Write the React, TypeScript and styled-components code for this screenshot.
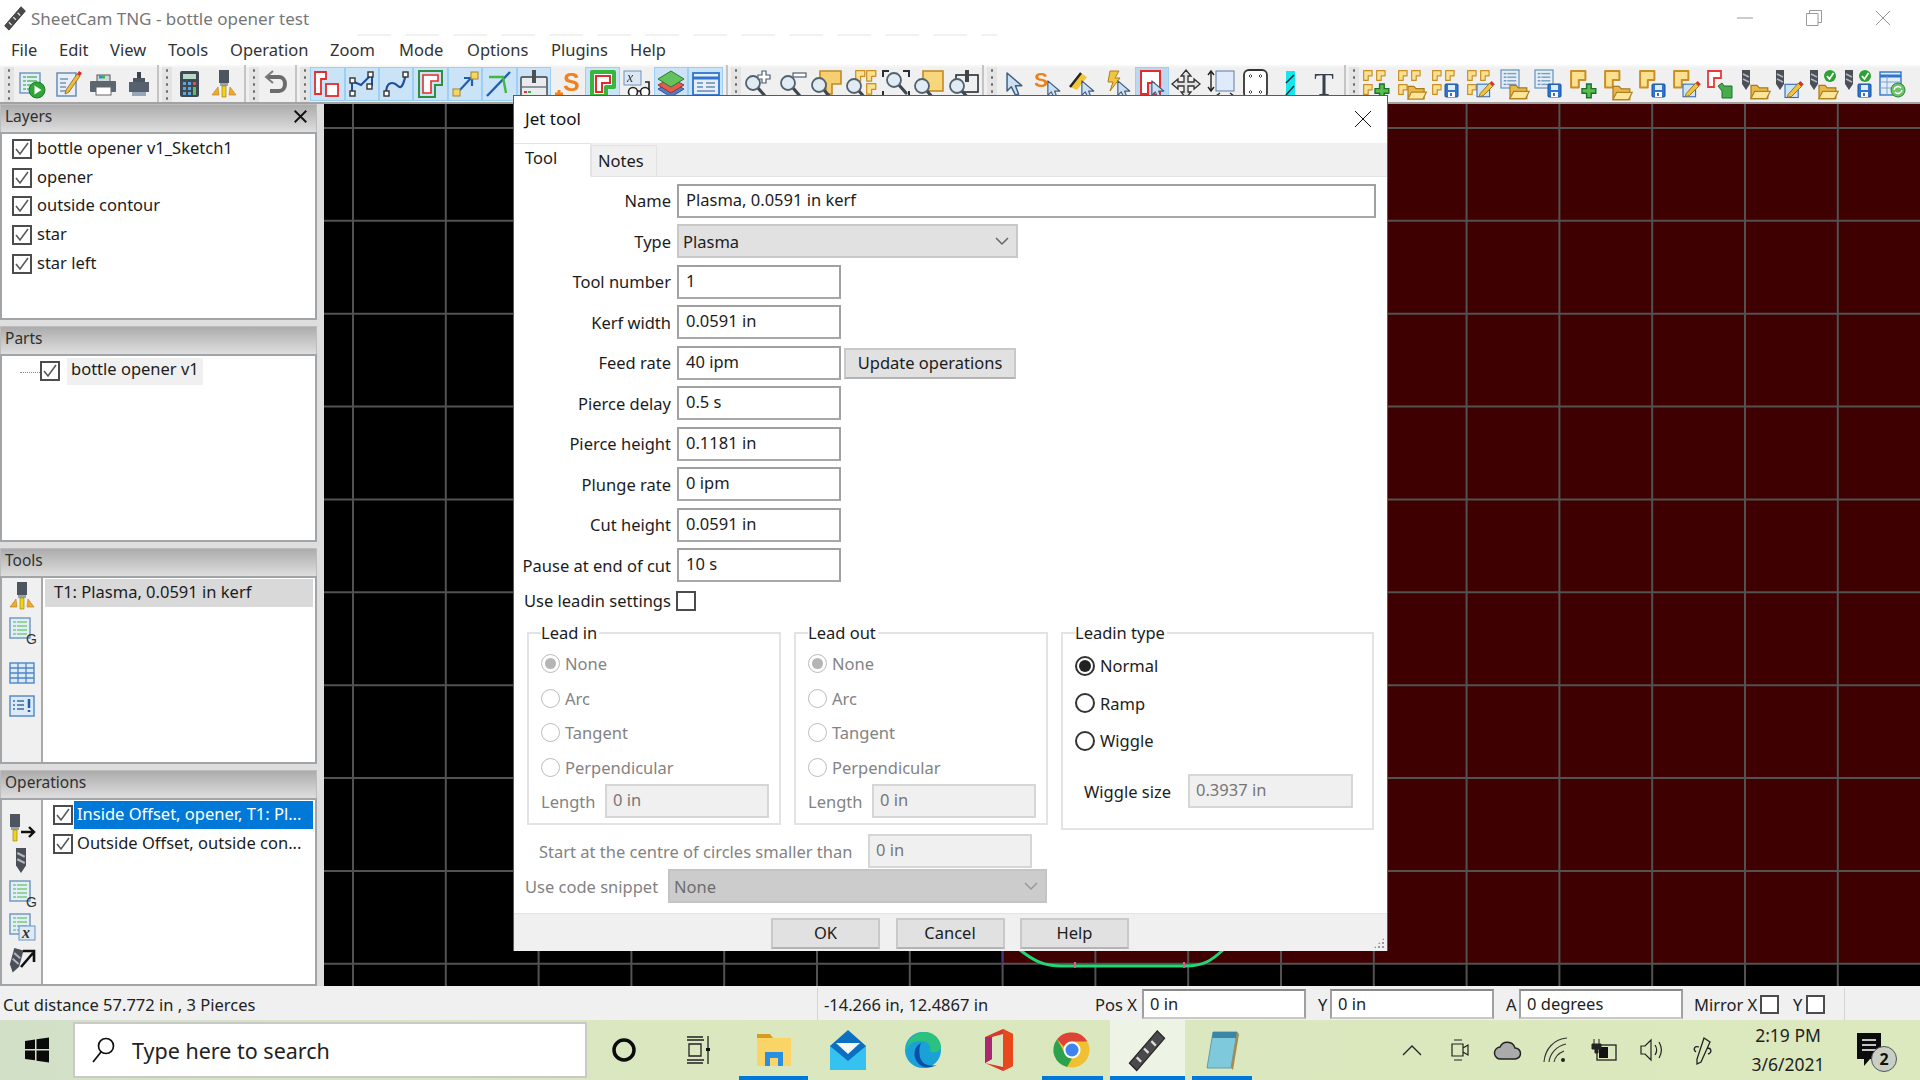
import React from 'react'
import styled, { createGlobalStyle } from 'styled-components'

const Global = createGlobalStyle`
  html, body { margin: 0; padding: 0; background: #f0f0f0; overflow: hidden; }
  body { font-family: "Noto Sans", "Open Sans", sans-serif; font-size: 16.5px; color: #1c1c1c; }
  * { box-sizing: border-box; }
  svg { display: block; overflow: visible; }
`

const Page = styled.div`
  position: relative;
  width: 1920px;
  height: 1080px;
  display: flex;
  flex-direction: column;
  overflow: hidden;
  filter: blur(0.35px);
`

/* title + menu */
const TitleBar = styled.div`
  height: 36px;
  background: #fff;
  display: flex;
  align-items: center;
  padding-left: 2px;
  color: #777;
  font-size: 17px;
`
const TitleText = styled.span`
  margin-left: 3px;
`
const WinButtons = styled.div`
  margin-left: auto;
  padding-right: 3px;
  display: flex;
`
const WinButton = styled.div`
  width: 69px;
  height: 36px;
  display: flex;
  align-items: center;
  justify-content: center;
`
const MenuBar = styled.div`
  position: relative;
  height: 29px;
  background: #fff;
  display: flex;
  align-items: center;
  padding: 0 0 2px 11px;
  font-size: 16.5px;
  color: #333;
`
const MenuGhost = styled.div`
  position: absolute;
  left: 357px;
  top: -2px;
  width: 640px;
  height: 2px;
  background: repeating-linear-gradient(90deg, #f1f1f1 0 34px, transparent 34px 48px);
`
const MenuItem = styled.span<{ $w: number }>`
  width: ${p => p.$w}px;
`

/* toolbar */
const Toolbar = styled.div`
  height: 39px;
  flex: none;
  padding-left: 2px;
  display: flex;
  gap: 1px;
  background: linear-gradient(#fafafa 0, #f0f0f0 3px);
  border-bottom: 2px solid #a2a2a2;
`
const ToolGroup = styled.div<{ $w?: number }>`
  flex: ${p => (p.$w ? `0 0 ${p.$w}px` : '1')};
  display: flex;
  align-items: center;
  border-right: ${p => (p.$w ? '2px solid #c4c4c4' : 'none')};
  padding-left: 12px;
  position: relative;
`
const Grip = styled.div`
  position: absolute;
  left: 2px;
  top: 2px;
  bottom: 0;
  width: 10px;
  background: radial-gradient(circle, #6a6a6a 1px, transparent 1.4px) center top / 4px 7px repeat-y, #e4e4e4;
`
const ToolButton = styled.div<{ $on?: boolean; $hot?: boolean; $pitch: number }>`
  flex: 0 0 ${p => p.$pitch}px;
  height: 34px;
  display: flex;
  align-items: center;
  justify-content: center;
  background: ${p => (p.$hot ? '#bcd8f0' : p.$on ? '#cbe3f7' : 'transparent')};
  border: 1px solid ${p => (p.$on || p.$hot ? '#9ccff5' : 'transparent')};
`

/* main area */
const Main = styled.div`
  flex: 1;
  display: flex;
  min-height: 0;
`
const Sidebar = styled.div`
  flex: 0 0 324px;
  background: #dedede;
  display: flex;
  flex-direction: column;
  gap: 6px;
  padding-right: 7px;
`
const Panel = styled.section`
  flex: 1;
  display: flex;
  flex-direction: column;
  min-height: 0;
`
const PanelHead = styled.header`
  height: 28px;
  flex: none;
  display: flex;
  align-items: center;
  justify-content: space-between;
  padding: 0 9px 5px 4px;
  background: linear-gradient(#acacac, #dedede);
  border: 1px solid #bdbdbd;
  border-bottom: none;
  color: #303030;
  font-size: 15.5px;
`
const PanelBody = styled.div`
  flex: 1;
  display: flex;
  background: #fff;
  border: 2px solid #a1a5a8;
  min-height: 0;
`
const SideIcons = styled.div`
  flex: 0 0 41px;
  background: #f0f0f0;
  border-right: 2px solid #a9a9a9;
  display: flex;
  flex-direction: column;
  align-items: center;
`
const SideIcon = styled.div<{ $top: number }>`
  margin-top: ${p => p.$top}px;
  height: 24px;
  display: flex;
  align-items: center;
`
const List = styled.div`
  flex: 1;
  min-width: 0;
  padding: 1px 2px 0;
  display: flex;
  flex-direction: column;
`
const LayerRow = styled.div`
  height: 28.6px;
  display: flex;
  align-items: center;
  gap: 5px;
  padding-left: 8px;
  line-height: 18px;
`
const LayerText = styled.span`
  margin-top: -2px;
`
const PartRow = styled.div`
  display: flex;
  align-items: center;
  padding: 0 0 0 16px;
  height: 28px;
`
const TreeDots = styled.div`
  width: 20px;
  border-top: 1px dotted #888;
  margin-top: 2px;
`
const PartLabel = styled.span`
  background: #f0f0f0;
  margin-left: 7px;
  padding: 0 4px;
  height: 27px;
  line-height: 21px;
`
const ToolRow = styled.div`
  height: 28px;
  background: #d9d9d9;
  padding: 0 0 3px 9px;
  display: flex;
  align-items: center;
`
const OpRow = styled.div`
  height: 28.6px;
  display: flex;
  align-items: center;
  padding-left: 8px;
  white-space: nowrap;
`
const OpText = styled.span<{ $selected?: boolean }>`
  flex: 1;
  height: 28px;
  line-height: 26px;
  padding-left: 3px;
  margin-left: 1px;
  background: ${p => (p.$selected ? '#0078d7' : 'transparent')};
  color: ${p => (p.$selected ? '#fff' : 'inherit')};
`
const Check = styled.span<{ $size?: number }>`
  flex: none;
  width: ${p => p.$size ?? 20}px;
  height: ${p => p.$size ?? 20}px;
  border: 2px solid #4c4c4c;
  background: #fff;
  display: inline-flex;
  align-items: center;
  justify-content: center;
`
const Canvas = styled.div`
  flex: 1;
  background: #000;
  min-width: 0;
`

/* status bar */
const StatusBar = styled.div`
  height: 34px;
  flex: none;
  background: #f0f0f0;
  display: flex;
  align-items: center;
  padding-top: 2px;
  color: #222;
`
const StatusCell = styled.div<{ $w: number; $line?: boolean }>`
  flex: 0 0 ${p => p.$w}px;
  height: 100%;
  display: flex;
  align-items: center;
  padding-left: ${p => (p.$line ? 6 : 3)}px;
  border-left: ${p => (p.$line ? '1px solid #d4d4d4' : 'none')};
`
const StatusLabel = styled.span<{ $w: number; $ml?: number }>`
  flex: 0 0 ${p => p.$w}px;
  margin-left: ${p => p.$ml ?? 0}px;
  white-space: nowrap;
`
const StatusInput = styled.div`
  flex: 0 0 164px;
  height: 30px;
  background: #fff;
  border: 2px solid #a0a0a0;
  border-top-color: #8a8a8a;
  border-bottom-color: #c8c8c8;
  padding-left: 6px;
  line-height: 25px;
`
const StatusEnd = styled.div`
  margin-left: 19px;
  height: 100%;
  border-left: 1px solid #d4d4d4;
`

/* taskbar */
const Taskbar = styled.div`
  height: 60px;
  flex: none;
  display: flex;
  align-items: stretch;
  background: linear-gradient(90deg, #d2e0c8 0, #dae7bf 640px, #dce8bd 100%);
`
const StartTile = styled.div`
  flex: 0 0 73px;
  display: flex;
  align-items: center;
  justify-content: center;
`
const SearchBox = styled.div`
  flex: 0 0 514px;
  margin: 2px 0;
  border: 2px solid #c9c9c9;
  background: #fff;
  display: flex;
  align-items: center;
  padding-left: 15px;
  gap: 16px;
  font-size: 21.5px;
  color: #222;
`
const AppTile = styled.div<{ $active?: boolean; $bar?: number }>`
  flex: 0 0 74.7px;
  position: relative;
  display: flex;
  align-items: center;
  justify-content: center;
  background: ${p => (p.$active ? '#eef4e5' : 'transparent')};
  &::after {
    content: '';
    display: ${p => (p.$bar === undefined ? 'none' : 'block')};
    position: absolute;
    left: ${p => p.$bar}px;
    right: ${p => p.$bar}px;
    bottom: 0;
    height: 4px;
    background: #0078d7;
  }
`
const Tray = styled.div`
  margin-left: auto;
  display: flex;
`
const TrayTile = styled.div<{ $w?: number }>`
  flex: 0 0 ${p => p.$w ?? 48}px;
  display: flex;
  align-items: center;
  justify-content: center;
`
const Clock = styled.div`
  flex: 0 0 118px;
  display: flex;
  flex-direction: column;
  align-items: center;
  justify-content: center;
  gap: 8px;
  font-size: 17.5px;
  line-height: 21px;
  color: #1f1f1f;
`
const Notify = styled.div`
  flex: 0 0 73px;
  padding-left: 9px;
  display: flex;
  align-items: center;
  position: relative;
`
const Badge = styled.span`
  position: absolute;
  left: 24px;
  top: 26px;
  width: 26px;
  height: 26px;
  border-radius: 50%;
  background: #c9cfc4;
  border: 1px solid #555;
  font-size: 16px;
  font-weight: 700;
  line-height: 24px;
  text-align: center;
  color: #111;
`

/* dialog */
const Dialog = styled.div`
  position: absolute;
  left: 513px;
  top: 95px;
  width: 875px;
  height: 856px;
  display: flex;
  flex-direction: column;
  background: #fff;
  border: 1px solid #5a5a5a;
  border-bottom: none;
`
const DialogHead = styled.div`
  height: 47px;
  flex: none;
  display: flex;
  align-items: center;
  justify-content: space-between;
  padding: 0 15px 2px 11px;
  font-size: 17px;
  color: #111;
`
const TabStrip = styled.div`
  height: 34px;
  flex: none;
  display: flex;
  align-items: flex-end;
  background: #f0f0f0;
  border-bottom: 1px solid #e3e3e3;
`
const Tab = styled.div<{ $on?: boolean }>`
  width: ${p => (p.$on ? 77 : 66)}px;
  height: ${p => (p.$on ? 34 : 31)}px;
  padding: ${p => (p.$on ? '2px 0 0 11px' : '3px 0 0 6px')};
  background: ${p => (p.$on ? '#fff' : '#f0f0f0')};
  border: 1px solid #e3e3e3;
  border-left: ${p => (p.$on ? 'none' : '1px solid #e3e3e3')};
  border-bottom: ${p => (p.$on ? '1px solid #fff' : 'none')};
  margin-bottom: ${p => (p.$on ? -1 : 0)}px;
`
const Form = styled.div`
  display: flex;
  flex-direction: column;
  gap: 7.05px;
  padding: 7px 11px 0 0;
`
const Row = styled.div`
  height: 33.45px;
  display: flex;
  align-items: center;
  gap: 6px;
`
const FieldLabel = styled.label`
  flex: 0 0 157px;
  text-align: right;
  white-space: nowrap;
`
const Field = styled.div<{ $w?: number }>`
  flex: ${p => (p.$w ? `0 0 ${p.$w}px` : '1')};
  height: 34px;
  border: 2px solid #a0a0a0;
  border-bottom-color: #a8a8a8;
  padding-left: 7px;
  line-height: 27px;
  background: #fff;
`
const Select = styled.div<{ $w: number; $off?: boolean }>`
  flex: 0 0 ${p => p.$w}px;
  height: 34px;
  display: flex;
  align-items: center;
  justify-content: space-between;
  padding: 0 7px 0 4px;
  background: ${p => (p.$off ? '#cccccc' : '#e1e1e1')};
  border: 2px solid ${p => (p.$off ? '#c4c4c4' : '#c8c8c8')};
  color: ${p => (p.$off ? '#6e6e6e' : 'inherit')};
`
const Button = styled.div<{ $w: number }>`
  flex: 0 0 ${p => p.$w}px;
  height: 31px;
  background: #e1e1e1;
  border: 2px solid #c9c9c9;
  border-bottom-color: #b4b4b4;
  text-align: center;
  line-height: 26px;
`
const UpdateButton = styled(Button)`
  margin: 2px 0 0 -3px;
`
const LeadinRow = styled.div`
  display: flex;
  align-items: center;
  height: 20px;
  margin: 9px 0 0 10px;
`
const LeadinLabel = styled.span`
  flex: 0 0 152px;
  white-space: nowrap;
`
const Groups = styled.div`
  display: flex;
  align-items: flex-start;
  gap: 13px;
  padding-left: 13px;
  margin-top: 13px;
`
const Group = styled.fieldset<{ $w: number; $pb: number }>`
  flex: 0 0 ${p => p.$w}px;
  min-width: 0;
  margin: 0;
  padding: 5px 12px ${p => p.$pb}px 12px;
  border: 2px solid #e3e3e3;
`
const Legend = styled.legend`
  padding: 0 2px 0 0;
  margin-left: 0;
  line-height: 18px;
`
const RadioRow = styled.div<{ $h: number; $off?: boolean }>`
  height: ${p => p.$h}px;
  display: flex;
  align-items: center;
  gap: 5px;
  color: ${p => (p.$off ? '#838383' : 'inherit')};
`
const Radio = styled.span<{ $off?: boolean; $dot?: boolean; $size: number }>`
  flex: none;
  width: ${p => p.$size}px;
  height: ${p => p.$size}px;
  border-radius: 50%;
  border: ${p => (p.$off ? '1px solid #bcbcbc' : '2px solid #333')};
  background: #fff;
  display: flex;
  align-items: center;
  justify-content: center;
  &::after {
    content: '';
    display: ${p => (p.$dot ? 'block' : 'none')};
    width: ${p => p.$size - 8}px;
    height: ${p => p.$size - 8}px;
    border-radius: 50%;
    background: ${p => (p.$off ? '#b5b5b5' : '#222')};
  }
`
const LengthRow = styled.div<{ $off?: boolean; $label: number; $ml?: number; $mt?: number }>`
  display: flex;
  align-items: center;
  margin: ${p => p.$mt ?? 0}px 0 0 ${p => p.$ml ?? 0}px;
  color: ${p => (p.$off ? '#838383' : 'inherit')};
  & > span {
    flex: 0 0 ${p => p.$label}px;
    white-space: nowrap;
  }
`
const OffField = styled.div<{ $w: number }>`
  flex: 0 0 ${p => p.$w}px;
  height: 34px;
  background: #f0f0f0;
  border: 2px solid #d6d6d6;
  padding-left: 6px;
  line-height: 27px;
  color: #777;
`
const Footer = styled.div`
  margin-top: auto;
  height: 38px;
  flex: none;
  display: flex;
  align-items: flex-start;
  gap: 15.5px;
  padding: 4px 0 0 257px;
  background: #f0f0f0;
  border-top: 1px solid #e3e3e3;
  position: relative;
`
const ResizeGrip = styled.div`
  position: absolute;
  right: 2px;
  bottom: 2px;
  width: 12px;
  height: 12px;
  background: radial-gradient(circle, #9a9a9a 1px, transparent 1.3px) 0 0 / 4px 4px;
  clip-path: polygon(100% 0, 100% 100%, 0 100%);
`

/* ---- icon pieces ---- */
const Ic = ({ s = 30, w, h, children }: { s?: number; w?: number; h?: number; children: React.ReactNode }) => (
  <svg viewBox={`0 0 ${w ?? 30} ${h ?? 30}`} width={w ?? s} height={h ?? s}>
    {children}
  </svg>
)
type At = { x?: number; y?: number; k?: number }
const at = ({ x = 0, y = 0, k = 1 }: At) => `translate(${x} ${y}) scale(${k})`

const Part = (p: At) => (
  <path transform={at(p)} d="M1 1h13v8H8v7H1z" fill="#fbe08f" stroke="#c98f26" strokeWidth="1.8" strokeLinejoin="round" />
)
const Plus = (p: At) => (
  <path transform={at(p)} d="M4 0h4v4h4v4H8v4H4V8H0V4h4z" fill="#58bf4b" stroke="#1e6f2b" strokeWidth="1.2" />
)
const Folder = (p: At) => (
  <g transform={at(p)}>
    <path d="M0 2h5l2 2h7v9H0z" fill="#e9b84c" stroke="#a87a1c" />
    <path d="M0 13l3-6h13l-3 6z" fill="#fde59a" stroke="#b0831f" />
  </g>
)
const Floppy = (p: At) => (
  <g transform={at(p)}>
    <rect width="13" height="13" rx="1" fill="#2f74cd" stroke="#1e4f97" />
    <rect x="3" y="1" width="7" height="5" fill="#dcecfb" />
    <rect x="3" y="8" width="7" height="5" fill="#fff" />
    <rect x="5" y="9" width="2" height="3" fill="#2f74cd" />
  </g>
)
const Pencil = (p: At) => (
  <g transform={at(p)}>
    <rect y="3" width="12" height="12" fill="#cfe3f7" stroke="#2f6ab8" />
    <path d="M3 12l9-10 3 3-9 9-4 1z" fill="#f1c23f" stroke="#8b6a18" strokeWidth=".8" />
    <path d="M12 2l2-2 3 3-2 2z" fill="#d8322c" />
  </g>
)
const Sheet = (p: At & { tone?: string }) => (
  <g transform={at(p)}>
    <rect width="20" height="20" fill="#e3eefa" stroke="#6d93bd" strokeWidth="1.4" />
    {[4, 8, 12, 16].map(y => (
      <g key={y}>
        <path d={`M3 ${y}h3`} stroke={p.tone ?? '#6d93bd'} strokeWidth="1.6" />
        <path d={`M7 ${y}h10`} stroke={p.tone ?? '#7e9dbf'} strokeWidth="1.6" />
      </g>
    ))}
  </g>
)
const Mag = (p: At) => (
  <g transform={at(p)}>
    <path d="M15 19l7 8" stroke="#3d4750" strokeWidth="3.2" strokeLinecap="round" />
    <circle cx="10" cy="14" r="7" fill="#e1ebf3" stroke="#51626f" strokeWidth="1.8" />
  </g>
)
const Cursor = (p: At) => (
  <path transform={at(p)} d="M1 1v17l4-4 4 8 3-1-3-8h6z" fill="#cddff2" stroke="#3e5f82" strokeWidth="1.4" strokeLinejoin="round" />
)
const Mill = (p: At) => (
  <g transform={at(p)}>
    <path d="M0 0h8v14l-4 6-4-6z" fill="#4b5058" />
    <path d="M1 4l6 3M1 9l6 3" stroke="#b3b7bc" strokeWidth="1.6" />
  </g>
)
const Ok = (p: At) => (
  <g transform={at(p)}>
    <circle cx="6" cy="6" r="6" fill="#2da234" />
    <path d="M3 6l2.5 3L9.500 3" stroke="#fff" strokeWidth="1.8" fill="none" />
  </g>
)
const Torch = (p: At) => (
  <g transform={at(p)}>
    <path d="M7 0h10v13H7z" fill="#4d5560" />
    <path d="M8 13h8v3H8z" fill="#9aa2ab" />
    <path d="M10 16h4v11h-4z" fill="#f3d315" stroke="#8a7a10" strokeWidth=".6" />
  </g>
)

const Icons: Record<string, React.ReactNode> = {
  run: <Ic><Sheet x={3} y={4} tone="#5fbf6a" /><circle cx="20" cy="21" r="8" fill="#2fa637" stroke="#1b7b2b" /><path d="M17.500 16.500l7 4.500-7 4.500z" fill="#fff" /></Ic>,
  edit: <Ic><rect x="4" y="4" width="19" height="23" fill="#e6eff9" stroke="#5f86b2" strokeWidth="1.4" /><path d="M7 10h8M7 14h6M7 18h6M7 22h10" stroke="#7a93b0" strokeWidth="1.5" /><path d="M13 21l11-16 3 2-11 16-4 2z" fill="#efbd3d" stroke="#86651a" strokeWidth=".8" /><path d="M24 5l2-3 3 2-2 3z" fill="#d63027" /></Ic>,
  print: <Ic><rect x="9" y="6" width="13" height="7" fill="#cfd8de" stroke="#555" /><path d="M11 8h3" stroke="#2b8fdc" strokeWidth="3" /><path d="M14 8h3" stroke="#3ab54a" strokeWidth="3" /><rect x="2" y="12" width="26" height="11" rx="1" fill="#5c666e" /><rect x="8" y="18" width="15" height="8" fill="#fff" stroke="#666" /></Ic>,
  post: <Ic><path d="M13 3h4v7h-4z" fill="#39424d" /><path d="M9 9h12v4H9z" fill="#4b5661" /><path d="M5 13h20v10H5z" fill="#56616d" /><path d="M8 23h14v4H8z" fill="#96a7b9" /></Ic>,
  calc: <Ic><rect x="6" y="2" width="19" height="26" rx="2" fill="#3e4953" /><rect x="9" y="5" width="13" height="5" fill="#b9d8c7" /><path d="M9 13h3v3H9zM14 13h3v3h-3zM9 18h3v3H9zM14 18h3v3h-3zM9 23h3v3H9zM14 23h3v3h-3z" fill="#5fa5df" /><path d="M19 13h3v3h-3z" fill="#d9564a" /><path d="M19 18h3v8h-3z" fill="#5cc06b" /></Ic>,
  torch: <Ic><Torch x={3} y={1} /><path d="M9 18l-6 8h7zM21 18l6 8h-7z" fill="#eea92e" stroke="#b77d1a" strokeWidth=".6" /></Ic>,
  undo: <Ic><path d="M6 8h12c8 0 8 14 0 14H9" fill="none" stroke="#6c6c6c" strokeWidth="4" /><path d="M12 2L5 8l7 6" fill="none" stroke="#7b7b7b" strokeWidth="2" /></Ic>,
  rects: <Ic><path d="M3 3h11v7H9v15H3z" fill="#fff" stroke="#e42c2c" strokeWidth="1.8" /><rect x="14" y="15" width="12" height="12" fill="#fff" stroke="#e42c2c" strokeWidth="1.8" /></Ic>,
  nodes: <Ic><path d="M5 25V12l9 4 11-11v12" fill="none" stroke="#1f4f9c" strokeWidth="2" /><g fill="#fff" stroke="#333" strokeWidth="1.4"><rect x="3" y="22" width="5" height="5" /><rect x="3" y="9" width="5" height="5" /><rect x="21" y="3" width="5" height="5" /><rect x="20" y="15" width="5" height="5" /></g></Ic>,
  curve: <Ic><path d="M5 25c0-14 8-12 12-8s6-4 8-12" fill="none" stroke="#1f4f9c" strokeWidth="2.2" /><g fill="#fff" stroke="#333" strokeWidth="1.4"><rect x="3" y="22" width="5" height="5" /><rect x="22" y="3" width="5" height="5" /></g></Ic>,
  offset: <Ic><path d="M3 2h23v14h-7v12H3z" fill="none" stroke="#2e8f3e" strokeWidth="2" /><path d="M7 6h15v6h-7v12H7z" fill="#fff" stroke="#e42c2c" strokeWidth="1.6" /></Ic>,
  dot: <Ic><path d="M8 23L22 8M14 9h8v8" fill="none" stroke="#1f5fb0" strokeWidth="2.2" /><rect x="3" y="20" width="7" height="7" fill="#f7d560" stroke="#a8862a" /><rect x="21" y="3" width="7" height="7" fill="#f7d560" stroke="#a8862a" /></Ic>,
  arrow: <Ic><path d="M3 27L26 3" stroke="#1f5fb0" strokeWidth="2.4" /><path d="M5 8h14l3 16" fill="none" stroke="#43b83f" strokeWidth="2.4" /></Ic>,
  machine: <Ic><rect x="2" y="8" width="26" height="19" rx="1" fill="#e9ecef" stroke="#3a3f45" strokeWidth="1.4" /><rect x="13" y="1" width="4" height="13" fill="#4a4f56" /><path d="M3 18h24" stroke="#3a3f45" /><path d="M5 23h3" stroke="#d33" strokeWidth="2" /><path d="M9 23h3" stroke="#3b3" strokeWidth="2" /></Ic>,
  splus: <Ic><path d="M2 25h8M6 21v8" stroke="#f0811c" strokeWidth="3" /><text x="10" y="22" fontFamily="Liberation Sans" fontWeight="700" fontSize="25" fill="#f0811c">S</text></Ic>,
  thick: <Ic><path d="M4 3h22v15h-8v9H4z" fill="#fff" stroke="#36b63a" strokeWidth="4" strokeLinejoin="round" /><path d="M8 7h14v7h-8v9H8z" fill="#fff" stroke="#e42c2c" strokeWidth="2" /></Ic>,
  glasses: <Ic><rect x="2" y="2" width="17" height="14" fill="#dbe7f3" stroke="#6d93bd" /><text x="5" y="13" fontFamily="Liberation Serif" fontStyle="italic" fontSize="14" fill="#333">x</text><circle cx="11" cy="23" r="4.500" fill="#fff" stroke="#222" strokeWidth="1.6" /><circle cx="23" cy="23" r="4.500" fill="#fff" stroke="#222" strokeWidth="1.6" /><path d="M15 22h4M27 21v-8h-4" fill="none" stroke="#222" strokeWidth="1.6" /></Ic>,
  layers: <Ic><path d="M15 13l13 7-13 8-13-8z" fill="#4f7fc8" stroke="#2d5596" /><path d="M15 9l13 7-13 8-13-8z" fill="#e25d4f" stroke="#9c3027" /><path d="M15 2l13 8-13 8-13-8z" fill="#63c25e" stroke="#2c7c2c" /></Ic>,
  window: <Ic><rect x="2" y="4" width="26" height="22" fill="#e5eff9" stroke="#2f74cd" strokeWidth="1.8" /><path d="M2 9h26" stroke="#2f74cd" strokeWidth="3" /><path d="M6 14h6M6 18h6M15 14h9M15 18h9M6 22h18" stroke="#6a8ab0" strokeWidth="1.5" /></Ic>,
  zplus: <Ic><Mag /><path d="M19 2h4v4h4v4h-4v4h-4v-4h-4V6h4z" fill="#fff" stroke="#4d5f70" strokeWidth="1.2" /></Ic>,
  zminus: <Ic><Mag /><rect x="15" y="4" width="13" height="4" fill="#fff" stroke="#4d5f70" strokeWidth="1.2" /></Ic>,
  zpart: <Ic><path d="M8 2h21v13h-9v10H14V14H8z" fill="#f6cf72" stroke="#c28a24" strokeWidth="1.6" /><Mag x={-3} y={2} /></Ic>,
  zparts: <Ic><Part x={8} y={1} k={.7} /><Part x={19} y={1} k={.7} /><Part x={19} y={14} k={.7} /><Mag x={-3} y={3} /></Ic>,
  zfit: <Ic><path d="M2 8V2h6M22 2h6v6M2 22v6h6M22 28h6v-6" fill="none" stroke="#2a2f35" strokeWidth="2" /><Mag x={3} y={-3} /></Ic>,
  zsq: <Ic><rect x="8" y="2" width="20" height="20" fill="#f7d67c" stroke="#c28a24" strokeWidth="1.6" /><Mag x={-3} y={3} /></Ic>,
  zmach: <Ic><rect x="6" y="6" width="22" height="17" fill="#eef0f2" stroke="#2a2f35" strokeWidth="1.6" /><rect x="15" y="1" width="4" height="12" fill="#444" /><Mag x={-3} y={3} /></Ic>,
  ptr: <Ic><Cursor x={7} y={3} k={1.05} /></Ic>,
  ptrS: <Ic><text x="0" y="18" fontFamily="Liberation Sans" fontWeight="700" fontSize="21" fill="#ef7f16">S</text><Cursor x={13} y={11} k={.85} /></Ic>,
  ptrLine: <Ic><path d="M2 18L13 4l6 4-10 13z" fill="#f1c63b" /><path d="M2 18L13 4" stroke="#222" strokeWidth="2.4" /><Cursor x={13} y={11} k={.85} /></Ic>,
  ptrBolt: <Ic><path d="M7 2h9l-4 7h5L7 22l3-9H5z" fill="#f2c53f" stroke="#a97f1c" /><Cursor x={14} y={11} k={.85} /></Ic>,
  ptrL: <Ic><path d="M4 2h19v24h-6V14h-6v11H4z" fill="#fff" stroke="#e42c2c" strokeWidth="2" /><Cursor x={14} y={11} k={.85} /></Ic>,
  move: <Ic><path d="M15 1l5 6h-3v6h6v-3l6 5-6 5v-3h-6v6h3l-5 6-5-6h3v-6H7v3l-6-5 6-5v3h6V7h-3z" fill="#e4e4e4" stroke="#333" strokeWidth="1.3" /></Ic>,
  dims: <Ic><rect x="10" y="2" width="18" height="20" fill="#dfeafa" stroke="#5a7ba3" /><path d="M5 2v20M2 6l3-4 3 4M2 18l3 4 3-4M10 27h18M14 24l-4 3 4 3M24 24l4 3-4 3" fill="none" stroke="#222" strokeWidth="1.4" /></Ic>,
  plate: <Ic><rect x="4" y="1" width="23" height="28" rx="5" fill="#fff" stroke="#333" strokeWidth="1.8" /><path d="M9 7l1.500-1.500L12 7l-1.500 1.500zM19 7l1.500-1.500L22 7l-1.500 1.500zM9 23l1.500-1.500L12 23l-1.500 1.500zM19 23l1.500-1.500L22 23l-1.500 1.500z" stroke="#444" fill="none" /></Ic>,
  cyan: <Ic><rect x="11" y="2" width="9" height="26" fill="#16e6ee" /><path d="M11 14l8-8M11 26l8-9" stroke="#1b2a33" strokeWidth="1.6" /></Ic>,
  letter: <Ic><text x="15" y="26" textAnchor="middle" fontFamily="Liberation Serif" fontSize="32" fill="#36414d">T</text></Ic>,
  multiPlus: <Ic><Part x={2} y={1} k={.65} /><Part x={15} y={1} k={.65} /><Part x={2} y={15} k={.65} /><Plus x={14} y={15} k={1.15} /></Ic>,
  multiOpen: <Ic><Part x={2} y={1} k={.65} /><Part x={15} y={1} k={.65} /><Part x={2} y={15} k={.65} /><Folder x={12} y={15} k={1.15} /></Ic>,
  multiSave: <Ic><Part x={2} y={1} k={.65} /><Part x={15} y={1} k={.65} /><Part x={2} y={15} k={.65} /><Floppy x={15} y={15} /></Ic>,
  multiEdit: <Ic><Part x={2} y={1} k={.65} /><Part x={15} y={1} k={.65} /><Part x={2} y={15} k={.65} /><Pencil x={12} y={12} k={1.05} /></Ic>,
  listOpen: <Ic><Sheet x={2} y={1} k={.9} /><Folder x={11} y={14} k={1.2} /></Ic>,
  listSave: <Ic><Sheet x={2} y={1} k={.9} /><Floppy x={15} y={15} /></Ic>,
  partPlus: <Ic><Part x={2} y={1} k={1.1} /><Plus x={14} y={15} k={1.15} /></Ic>,
  partOpen: <Ic><Part x={2} y={1} k={1.1} /><Folder x={11} y={15} k={1.2} /></Ic>,
  partSave: <Ic><Part x={2} y={1} k={1.1} /><Floppy x={15} y={15} /></Ic>,
  partEdit: <Ic><Part x={2} y={1} k={1.1} /><Pencil x={12} y={12} k={1.05} /></Ic>,
  redGreen: <Ic><path d="M3 2h13v7H9v9H3z" fill="#fff" stroke="#e83a3a" strokeWidth="1.8" /><path d="M13 17l4-3 2 3h8v12H17v-7z" fill="#45ad4a" stroke="#1f7030" /></Ic>,
  millOpen: <Ic><Mill x={2} y={1} /><Folder x={11} y={14} k={1.2} /></Ic>,
  millEdit: <Ic><Mill x={2} y={1} /><Pencil x={11} y={12} k={1.1} /></Ic>,
  millOkOpen: <Ic><Mill x={2} y={1} /><Ok x={16} y={1} /><Folder x={11} y={14} k={1.2} /></Ic>,
  millOkSave: <Ic><Mill x={2} y={1} /><Ok x={16} y={1} /><Floppy x={15} y={15} /></Ic>,
  tableSync: <Ic><rect x="3" y="3" width="21" height="23" fill="#e3eefa" stroke="#2f74cd" strokeWidth="1.4" /><path d="M3 7h21" stroke="#2f74cd" strokeWidth="3" /><path d="M3 13h21M3 19h21M10 7v19" stroke="#7da2cc" /><circle cx="21" cy="21" r="7" fill="#6cc368" stroke="#2a8232" /><path d="M17 21a4 4 0 0 1 7-2M25 21a4 4 0 0 1-7 2" fill="none" stroke="#fff" strokeWidth="1.4" /></Ic>,
}

const gcode = (
  <Ic>
    <Sheet x={3} y={3} tone="#7ccf7f" />
    <text x="19" y="29" fontFamily="Liberation Sans" fontSize="14" fill="#333">G</text>
  </Ic>
)
const gridIcon = (
  <Ic>
    <rect x="3" y="5" width="24" height="20" fill="#dce9f7" stroke="#4d86c6" strokeWidth="1.4" />
    <path d="M3 10h24M3 15h24M3 20h24M11 5v20M19 5v20" stroke="#4d86c6" strokeWidth="1.3" />
  </Ic>
)
const alertList = (
  <Ic>
    <rect x="3" y="5" width="24" height="20" fill="#dce9f7" stroke="#4d86c6" strokeWidth="1.4" />
    <path d="M6 10h2M10 10h7M6 14h2M10 14h7M6 18h2M10 18h7" stroke="#3b6ea8" strokeWidth="1.4" />
    <path d="M22 8v9M22 19v2" stroke="#1f5fb0" strokeWidth="2.500" />
  </Ic>
)
const varList = (
  <Ic>
    <Sheet x={3} y={2} tone="#7ccf7f" />
    <rect x="12" y="14" width="16" height="14" fill="#dce9f7" stroke="#6d93bd" />
    <text x="15" y="26" fontFamily="Liberation Serif" fontStyle="italic" fontWeight="700" fontSize="16" fill="#333">x</text>
  </Ic>
)
const torchSide = (
  <Ic>
    <Torch x={3} y={1} />
    <path d="M9 18l-6 8h7zM21 18l6 8h-7z" fill="#eea92e" stroke="#b77d1a" strokeWidth=".6" />
  </Ic>
)
const torchArrow = (
  <Ic>
    <Torch x={-4} y={2} />
    <path d="M14 20h13M22 15l5 5-5 5" stroke="#111" strokeWidth="2.400" fill="none" />
  </Ic>
)
const millSide = <Ic><Mill x={9} y={3} k={1.25} /></Ic>
const millArrow = (
  <Ic>
    <g transform="rotate(15 10 12)"><Mill x={5} y={4} k={1.2} /></g>
    <path d="M14 22l12-14M16 6h11v11" stroke="#111" strokeWidth="2.600" fill="none" />
  </Ic>
)

const tick = (
  <svg width="16" height="16" viewBox="0 0 16 16">
    <path d="M2 8l4 5 8-11" fill="none" stroke="#5a5a5a" strokeWidth="1.6" />
  </svg>
)
const CheckBox = ({ on, size }: { on?: boolean; size?: number }) => <Check $size={size}>{on ? tick : null}</Check>
const chevron = (c: string) => (
  <svg width="14" height="9" viewBox="0 0 14 9">
    <path d="M1 1l6 6 6-6" fill="none" stroke={c} strokeWidth="1.500" />
  </svg>
)
const crossSvg = (size: number, c: string, sw = 1) => (
  <svg width={size} height={size} viewBox="0 0 18 18">
    <path d="M1 1l16 16M17 1L1 17" stroke={c} strokeWidth={sw} />
  </svg>
)

const toolGroups: { w?: number; pitch?: number; items: (string | [string, 'on' | 'hot'])[] }[] = [
  { w: 156, pitch: 35.8, items: ['run', 'edit', 'print', 'post'] },
  { w: 86, items: ['calc', 'torch'] },
  { w: 50, items: ['undo'] },
  {
    w: 430,
    items: [
      ['rects', 'on'], ['nodes', 'on'], ['curve', 'on'], ['offset', 'on'], ['dot', 'on'], ['arrow', 'on'], ['machine', 'on'],
      'splus', ['thick', 'on'], 'glasses', ['layers', 'on'], ['window', 'on'],
    ],
  },
  { w: 255, items: ['zplus', 'zminus', 'zpart', 'zparts', 'zfit', 'zsq', 'zmach'] },
  { w: 361, items: ['ptr', 'ptrS', 'ptrLine', 'ptrBolt', ['ptrL', 'hot'], 'move', 'dims', 'plate', 'cyan', 'letter'] },
  {
    items: [
      'multiPlus', 'multiOpen', 'multiSave', 'multiEdit', 'listOpen', 'listSave', 'partPlus', 'partOpen', 'partSave',
      'partEdit', 'redGreen', 'millOpen', 'millEdit', 'millOkOpen', 'millOkSave', 'tableSync',
    ],
  },
]

const menus: [string, number][] = [
  ['File', 48], ['Edit', 51], ['View', 58], ['Tools', 62], ['Operation', 100], ['Zoom', 69], ['Mode', 68],
  ['Options', 84], ['Plugins', 79], ['Help', 50],
]

const sheetLogo = (size: number) => (
  <svg width={size} height={size} viewBox="0 0 30 30">
    <path d="M3 24L22 2l5 5L8 29z" fill="#4a4a4a" stroke="#222" strokeWidth=".8" />
    <path d="M8 20l3 3M13 14l3 3M18 9l3 3" stroke="#ddd" strokeWidth="1.600" />
  </svg>
)

function GridCanvas() {
  const w = 1596
  const h = 882
  const xs = Array.from({ length: 18 }, (_, i) => 29 + i * 92.8)
  const ys = Array.from({ length: 10 }, (_, i) => 24 + i * 92.87)
  return (
    <svg width={w} height={h} viewBox={`0 0 ${w} ${h}`}>
      <rect x="678" y="0" width={w - 678} height="860" fill="#3e0000" />
      {xs.map(x => <path key={x} d={`M${x} 0V${h}`} stroke="#525252" strokeWidth="2" />)}
      {ys.map(y => <path key={y} d={`M0 ${y}H${w}`} stroke="#525252" strokeWidth="2" />)}
      <path d="M678 845V860" stroke="#2525b0" strokeWidth="1" />
      <path d="M696 846c14 11 24 16 42 16h124c18 0 26-6 37-16" fill="none" stroke="#1fd873" strokeWidth="3" />
      <path d="M751 858v6M860 858v6" stroke="#e25590" strokeWidth="2" />
    </svg>
  )
}

const Lead = ({ title }: { title: string }) => (
  <Group $w={254} $pb={5}>
    <Legend>{title}</Legend>
    {['None', 'Arc', 'Tangent', 'Perpendicular'].map((t, i) => (
      <RadioRow key={t} $h={34.4} $off>
        <Radio $off $dot={i === 0} $size={19} />
        {t}
      </RadioRow>
    ))}
    <LengthRow $off $label={64}>
      <span>Length</span>
      <OffField $w={164}>0 in</OffField>
    </LengthRow>
  </Group>
)

const fields = [
  ['Tool number', '1'],
  ['Kerf width', '0.0591 in'],
  ['Feed rate', '40 ipm'],
  ['Pierce delay', '0.5 s'],
  ['Pierce height', '0.1181 in'],
  ['Plunge rate', '0 ipm'],
  ['Cut height', '0.0591 in'],
  ['Pause at end of cut', '10 s'],
]

export default function App() {
  return (
    <Page>
      <Global />
      <TitleBar>
        {sheetLogo(26)}
        <TitleText>SheetCam TNG - bottle opener test</TitleText>
        <WinButtons>
          <WinButton>
            <svg width="16" height="2"><path d="M0 1h16" stroke="#999" /></svg>
          </WinButton>
          <WinButton>
            <svg width="16" height="16" viewBox="0 0 16 16">
              <path d="M.5 3.500h11.500v12H.5zM3.500 3.500V.5h12v12H12" fill="none" stroke="#999" />
            </svg>
          </WinButton>
          <WinButton>{crossSvg(16, '#888')}</WinButton>
        </WinButtons>
      </TitleBar>
      <MenuBar>
        <MenuGhost />
        {menus.map(([m, w]) => <MenuItem key={m} $w={w}>{m}</MenuItem>)}
      </MenuBar>
      <Toolbar>
        {toolGroups.map((g, i) => (
          <ToolGroup key={i} $w={g.w}>
            <Grip />
            {g.items.map(it => {
              const name = typeof it === 'string' ? it : it[0]
              const mode = typeof it === 'string' ? undefined : it[1]
              return (
                <ToolButton key={name} $pitch={g.pitch ?? 34.4} $on={mode === 'on'} $hot={mode === 'hot'}>
                  {Icons[name]}
                </ToolButton>
              )
            })}
          </ToolGroup>
        ))}
      </Toolbar>

      <Main>
        <Sidebar>
          <Panel>
            <PanelHead>
              Layers
              {crossSvg(13, '#111', 2.600)}
            </PanelHead>
            <PanelBody>
              <List>
                {['bottle opener v1_Sketch1', 'opener', 'outside contour', 'star', 'star left'].map(t => (
                  <LayerRow key={t}>
                    <CheckBox on />
                    <LayerText>{t}</LayerText>
                  </LayerRow>
                ))}
              </List>
            </PanelBody>
          </Panel>
          <Panel>
            <PanelHead>Parts</PanelHead>
            <PanelBody>
              <List>
                <PartRow>
                  <TreeDots />
                  <CheckBox on />
                  <PartLabel>bottle opener v1</PartLabel>
                </PartRow>
              </List>
            </PanelBody>
          </Panel>
          <Panel>
            <PanelHead>Tools</PanelHead>
            <PanelBody>
              <SideIcons>
                <SideIcon $top={6}>{torchSide}</SideIcon>
                <SideIcon $top={10}>{gcode}</SideIcon>
                <SideIcon $top={19}>{gridIcon}</SideIcon>
                <SideIcon $top={9}>{alertList}</SideIcon>
              </SideIcons>
              <List>
                <ToolRow>T1: Plasma, 0.0591 in kerf</ToolRow>
              </List>
            </PanelBody>
          </Panel>
          <Panel>
            <PanelHead>Operations</PanelHead>
            <PanelBody>
              <SideIcons>
                <SideIcon $top={15}>{torchArrow}</SideIcon>
                <SideIcon $top={9}>{millSide}</SideIcon>
                <SideIcon $top={9}>{gcode}</SideIcon>
                <SideIcon $top={10}>{varList}</SideIcon>
                <SideIcon $top={9}>{millArrow}</SideIcon>
              </SideIcons>
              <List>
                <OpRow>
                  <CheckBox on />
                  <OpText $selected>Inside Offset, opener, T1: Pl...</OpText>
                </OpRow>
                <OpRow>
                  <CheckBox on />
                  <OpText>Outside Offset, outside con...</OpText>
                </OpRow>
              </List>
            </PanelBody>
          </Panel>
        </Sidebar>
        <Canvas>
          <GridCanvas />
        </Canvas>
      </Main>

      <StatusBar>
        <StatusCell $w={817}>Cut distance 57.772 in , 3 Pierces</StatusCell>
        <StatusCell $w={278} $line>-14.266 in, 12.4867 in</StatusCell>
        <StatusLabel $w={47}>Pos X</StatusLabel>
        <StatusInput>0 in</StatusInput>
        <StatusLabel $w={12} $ml={12}>Y</StatusLabel>
        <StatusInput>0 in</StatusInput>
        <StatusLabel $w={13} $ml={12}>A</StatusLabel>
        <StatusInput>0 degrees</StatusInput>
        <StatusLabel $w={66} $ml={11}>Mirror X</StatusLabel>
        <CheckBox size={19} />
        <StatusLabel $w={13} $ml={14}>Y</StatusLabel>
        <CheckBox size={19} />
        <StatusEnd />
      </StatusBar>

      <Taskbar>
        <StartTile>
          <svg width="26" height="26" viewBox="0 0 26 26">
            <path d="M1 4l10-1.500V12H1zM12.500 2.200L25 .5V12H12.500zM1 13.500h10v9.800L1 22zM12.500 13.500H25v12l-12.500-1.700z" fill="#0a0a0a" />
          </svg>
        </StartTile>
        <SearchBox>
          <svg width="26" height="28" viewBox="0 0 26 28">
            <circle cx="16" cy="10" r="7.500" fill="none" stroke="#111" strokeWidth="1.700" />
            <path d="M11 16L3 26" stroke="#111" strokeWidth="1.800" />
          </svg>
          Type here to search
        </SearchBox>
        <AppTile>
          <svg width="26" height="26" viewBox="0 0 26 26">
            <circle cx="13" cy="13" r="10" fill="none" stroke="#0c0c0c" strokeWidth="3.500" />
          </svg>
        </AppTile>
        <AppTile>
          <svg width="26" height="30" viewBox="0 0 26 30">
            <path d="M1 2h16M1 28h16M3 9h12v12H3zM1 5h17M1 25h17M22 1v28" fill="none" stroke="#222" strokeWidth="1.300" />
            <path d="M20 13h4v3h-4z" fill="#111" />
          </svg>
        </AppTile>
        <AppTile $bar={3}>
          <svg width="36" height="34" viewBox="0 0 36 34">
            <path d="M1 1h13l3 4H1z" fill="#d89b22" />
            <path d="M1 5h34v28H1z" fill="#fbd467" />
            <path d="M9 19h18v14h-5v-8h-8v8H9z" fill="#2a8fe0" />
          </svg>
        </AppTile>
        <AppTile>
          <svg width="36" height="40" viewBox="0 0 36 40">
            <path d="M18 0l18 16v24H0V16z" fill="#0b6fc2" />
            <path d="M0 16l18 15 18-15v24H0z" fill="#36c2f0" />
            <path d="M6 13h24L18 24z" fill="#f6f8f4" />
          </svg>
        </AppTile>
        <AppTile>
          <svg width="38" height="42" viewBox="0 0 38 42">
            <circle cx="19" cy="21" r="18" fill="#1aa2d8" />
            <path d="M2 22C3 8 14 3 21 3c8 0 15 6 16 14 0 6-8 8-11 5 2-6-3-10-9-10C9 12 3 16 2 22z" fill="#2ac27e" />
            <path d="M17 14c-7 3-9 13-3 20 4 5 12 6 19 2-9 2-15-1-17-8-1-5-1-10 1-14z" fill="#0c4ea8" />
          </svg>
        </AppTile>
        <AppTile>
          <svg width="30" height="42" viewBox="0 0 30 42">
            <path d="M20 0l10 5v32l-10 5L2 34 20 38V5L9 8v22l-7 4V8z" fill="#d8392b" />
            <path d="M2 8l7 0v22l-7 4z" fill="#a9286f" />
            <path d="M20 0l10 5v32l-10 5z" fill="#e8481c" />
          </svg>
        </AppTile>
        <AppTile $bar={7}>
          <svg width="36" height="36" viewBox="0 0 36 36">
            <circle cx="18" cy="18" r="17.500" fill="#f0c033" />
            <path d="M18 .5A17.500 17.500 0 0 1 33.200 9.500H18a8.800 8.800 0 0 0-8.200 5.200L3 7.200A17.500 17.500 0 0 1 18 .5z" fill="#dd4437" />
            <path d="M3 7.200l7 12.400a8.800 8.800 0 0 0 8 7L13 35A17.500 17.500 0 0 1 3 7.200z" fill="#2ca24d" />
            <circle cx="18" cy="18" r="8.500" fill="#fff" />
            <circle cx="18" cy="18" r="6.500" fill="#3f84ee" />
          </svg>
        </AppTile>
        <AppTile $active $bar={0}>{sheetLogo(44)}</AppTile>
        <AppTile $bar={7}>
          <svg width="34" height="40" viewBox="0 0 34 40">
            <path d="M8 2h24L26 38H2z" fill="#7ec9dc" stroke="#5e9cae" />
            <path d="M8 2h24l-1 6H7z" fill="#3c86a5" />
            <path d="M26 38l6-36 2 2-6 36z" fill="#a98a4a" />
          </svg>
        </AppTile>
        <Tray>
          <TrayTile>
            <svg width="20" height="12" viewBox="0 0 20 12"><path d="M1 11l9-9 9 9" fill="none" stroke="#222" strokeWidth="1.300" /></svg>
          </TrayTile>
          <TrayTile>
            <svg width="20" height="28" viewBox="0 0 20 28">
              <path d="M4 4h8M4 24h8M2 8v12h11V8zM13 12l5-3v10l-5-3" fill="none" stroke="#222" strokeWidth="1.200" />
            </svg>
          </TrayTile>
          <TrayTile>
            <svg width="28" height="24" viewBox="0 0 28 24">
              <path d="M7 21a6 6 0 0 1-1-12 8 8 0 0 1 15 1 5.500 5.500 0 0 1 0 11z" fill="#aaa" stroke="#222" strokeWidth="1.500" />
            </svg>
          </TrayTile>
          <TrayTile>
            <svg width="26" height="26" viewBox="0 0 26 26">
              <path d="M1 25C2 12 11 2 24 1M6 25c1-9 8-16 17-18M11 25c1-5 5-9 10-11" fill="none" stroke="#333" strokeWidth="1.100" />
              <circle cx="20" cy="23" r="2" fill="#222" />
            </svg>
          </TrayTile>
          <TrayTile>
            <svg width="26" height="24" viewBox="0 0 26 24">
              <rect x="6" y="7" width="19" height="15" fill="none" stroke="#222" strokeWidth="1.300" />
              <rect x="8" y="9" width="9" height="11" fill="#111" />
              <path d="M3 1v5M8 1v5M1 6h9v5H7v4H4v-4H1z" fill="#222" stroke="#222" />
            </svg>
          </TrayTile>
          <TrayTile>
            <svg width="26" height="26" viewBox="0 0 26 26">
              <path d="M2 9h4l6-6v20l-6-6H2zM16 8c2 3 2 7 0 10M20 5c3 5 3 11 0 16" fill="none" stroke="#222" strokeWidth="1.200" />
            </svg>
          </TrayTile>
          <TrayTile $w={53}>
            <svg width="24" height="30" viewBox="0 0 24 30">
              <path d="M13 3l6 4-9 20-4 2v-5zM8 12c-5-2-6 3-3 5M16 13c5 0 5 5 1 6" fill="none" stroke="#222" strokeWidth="1.300" />
            </svg>
          </TrayTile>
          <Clock>
            <span>2:19 PM</span>
            <span>3/6/2021</span>
          </Clock>
          <Notify>
            <svg width="26" height="36" viewBox="0 0 26 36">
              <path d="M1 1h24v26H14l-6 7v-7H1z" fill="#0b0b0b" />
              <path d="M6 8h14M6 13h14M6 18h14" stroke="#fff" strokeWidth="1.300" />
            </svg>
            <Badge>2</Badge>
          </Notify>
        </Tray>
      </Taskbar>

      <Dialog>
        <DialogHead>
          Jet tool
          {crossSvg(18, '#111')}
        </DialogHead>
        <TabStrip>
          <Tab $on>Tool</Tab>
          <Tab>Notes</Tab>
        </TabStrip>
        <Form>
          <Row>
            <FieldLabel>Name</FieldLabel>
            <Field>Plasma, 0.0591 in kerf</Field>
          </Row>
          <Row>
            <FieldLabel>Type</FieldLabel>
            <Select $w={341}>
              Plasma
              {chevron('#666')}
            </Select>
          </Row>
          {fields.map(([l, v]) => (
            <Row key={l}>
              <FieldLabel>{l}</FieldLabel>
              <Field $w={164}>{v}</Field>
              {l === 'Feed rate' && <UpdateButton $w={172}>Update operations</UpdateButton>}
            </Row>
          ))}
        </Form>
        <LeadinRow>
          <LeadinLabel>Use leadin settings</LeadinLabel>
          <CheckBox />
        </LeadinRow>
        <Groups>
          <Lead title="Lead in" />
          <Lead title="Lead out" />
          <Group $w={313} $pb={20}>
            <Legend>Leadin type</Legend>
            {['Normal', 'Ramp', 'Wiggle'].map((t, i) => (
              <RadioRow key={t} $h={37.5}>
                <Radio $dot={i === 0} $size={20} />
                {t}
              </RadioRow>
            ))}
            <LengthRow $label={104} $ml={9} $mt={15}>
              <span>Wiggle size</span>
              <OffField $w={165}>0.3937 in</OffField>
            </LengthRow>
          </Group>
        </Groups>
        <LengthRow $off $label={329} $ml={25} $mt={4}>
          <span>Start at the centre of circles smaller than</span>
          <OffField $w={164}>0 in</OffField>
        </LengthRow>
        <LengthRow $off $label={143} $ml={11} $mt={1}>
          <span>Use code snippet</span>
          <Select $w={379} $off>
            None
            {chevron('#999')}
          </Select>
        </LengthRow>
        <Footer>
          <Button $w={109}>OK</Button>
          <Button $w={109}>Cancel</Button>
          <Button $w={109}>Help</Button>
          <ResizeGrip />
        </Footer>
      </Dialog>
    </Page>
  )
}
